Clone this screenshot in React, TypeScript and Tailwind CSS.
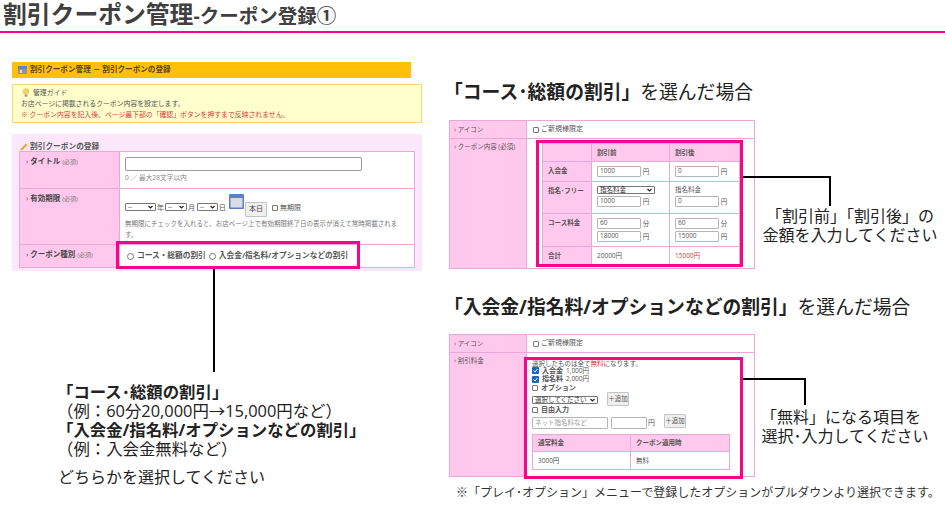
import React from 'react';

const sans = 'font-["Open_Sans","Noto_Sans_CJK_JP",sans-serif]';
const cellBorder = 'border-[#e9a9d8]';

function Field({ value, className = '' }: { value?: string; className?: string }) {
  return (
    <span
      className={`inline-flex items-center h-[11px] px-[2px] align-top border border-[#b5b5b5] rounded-[1px] bg-white text-[6.5px] leading-none text-[#555] ${className}`}
    >
      {value}
    </span>
  );
}

function Select({ label, className = '' }: { label: string; className?: string }) {
  return (
    <span
      className={`inline-flex items-center justify-between h-[8px] px-[2px] border border-[#777] rounded-[1px] bg-white text-[6.5px] leading-none text-[#333] ${className}`}
    >
      {label}
      <svg width="5" height="4" viewBox="0 0 5 4">
        <path d="M0.5 1 L2.5 3 L4.5 1" fill="none" stroke="#222" strokeWidth="1.2" />
      </svg>
    </span>
  );
}

function AddButton({ className = '' }: { className?: string }) {
  return (
    <span
      className={`inline-flex items-center justify-center w-[22px] h-[14px] border border-[#c4c4c4] rounded-[1px] bg-[#efefef] text-[6.5px] text-[#555] ${className}`}
    >
      ＋追加
    </span>
  );
}

function Box({ checked }: { checked?: boolean }) {
  return checked ? (
    <svg width="7" height="7" viewBox="0 0 7 7" className="shrink-0">
      <rect width="7" height="7" rx="1" fill="#1766c2" />
      <path d="M1.5 3.5 L3 5 L5.5 2" fill="none" stroke="#fff" strokeWidth="1" />
    </svg>
  ) : (
    <span className="w-[6px] h-[6px] shrink-0 border border-[#777] rounded-[1px] bg-white" />
  );
}

function Radio() {
  return <span className="w-[7px] h-[7px] rounded-full border border-[#777] bg-white shrink-0" />;
}

function LeftRow({
  label,
  note,
  height,
  children,
}: {
  label: string;
  note: string;
  height: string;
  children: React.ReactNode;
}) {
  return (
    <div className={`flex border-b ${cellBorder} ${height}`}>
      <div className={`w-[100px] shrink-0 bg-[#ffc8ec] border-r ${cellBorder} pl-[6px] pt-[4px] text-[7.5px] leading-[11px] text-[#444]`}>
        › <span className="font-bold">{label}</span> <span className="text-[6px] text-[#777]">{note}</span>
      </div>
      <div className="flex-1 pl-[5px] bg-white">{children}</div>
    </div>
  );
}

function GuideAndForm() {
  return (
    <div className="flex flex-col w-[410px]">
      <div className="flex items-center gap-[3px] w-[399px] h-[16px] bg-[#ffc107] pl-[6px] text-[7.6px] font-bold text-[#5a4300]">
        <svg width="9" height="8" viewBox="0 0 9 8">
          <rect x="0" y="2" width="9" height="6" fill="#8a9a8a" />
          <rect x="0" y="0" width="9" height="3" fill="#5f87b8" />
          <rect x="2" y="4" width="2" height="3" fill="#e8e0c0" />
        </svg>
        割引クーポン管理 － 割引クーポンの登録
      </div>
      <div className="mt-[6px] h-[39px] border border-[#f3d873] bg-[#ffffcc] pl-[8px] pt-[2px] text-[6.85px] leading-[11px] text-[#555]">
        <div className="flex items-center gap-[3px] pl-[1px]">
          <svg width="8" height="9" viewBox="0 0 8 9">
            <circle cx="4" cy="3.5" r="3.2" fill="#f4cf63" />
            <rect x="2.6" y="6.5" width="2.8" height="2.2" fill="#9b9b9b" />
          </svg>
          管理ガイド
        </div>
        <div>お店ページに掲載されるクーポン内容を設定します。</div>
        <div className="text-[#d43c3c]">※ クーポン内容を記入後、ページ最下部の「確認」ボタンを押すまで反映されません。</div>
      </div>
      <div className="mt-[11px] h-[137px] bg-[#fce8fa] px-[7px] pt-[7px]">
        <div className="flex items-end gap-[2px] h-[10px] pl-[1px] text-[7.7px] leading-[10px] font-bold text-[#555]">
          <svg width="8" height="8" viewBox="0 0 8 8">
            <path d="M0.5 7.5 L1 5.5 L6 0.5 L7.5 2 L2.5 7 Z" fill="#eba23c" />
          </svg>
          割引クーポンの登録
        </div>
        <div className={`border border-b-0 ${cellBorder}`}>
          <LeftRow label="タイトル" note="(必須)" height="h-[37px]">
            <div className="mt-[5px] w-[237px] h-[14px] border border-[#9a9a9a] rounded-[2px] bg-white" />
            <div className="mt-[2px] text-[6.7px] text-[#888]">0 ／ 最大28文字以内</div>
          </LeftRow>
          <LeftRow label="有効期限" note="(必須)" height="h-[56px]">
            <div className="flex items-end gap-[1px] h-[28px] text-[7px] text-[#555]">
              <Select label="--" className="w-[31px] mb-[6px]" />
              <span className="mb-[4px]">年</span>
              <Select label="--" className="w-[22px] mb-[6px]" />
              <span className="mb-[4px]">月</span>
              <Select label="--" className="w-[21px] mb-[6px] ml-[1px]" />
              <span className="mb-[4px]">日</span>
              <svg width="15" height="15" viewBox="0 0 15 15" className="mb-[8px] ml-[2px]">
                <rect width="15" height="15" rx="1" fill="#5c80c4" />
                <rect x="1.5" y="4" width="12" height="9.5" fill="#d8dce8" />
              </svg>
              <span className="inline-flex items-center justify-center w-[22px] h-[15px] border border-[#c4c4c4] rounded-[1px] bg-[#efefef] text-[#444]">
                本日
              </span>
              <span className="flex items-center gap-[2px] ml-[4px] mb-[4px]">
                <Box />
                無期限
              </span>
            </div>
            <div className="mt-[1px] w-[280px] text-[6.5px] leading-[11px] text-[#777]">
              無期限にチェックを入れると、お店ページ上で有効期限終了日の表示が消えて常時掲載されます。
            </div>
          </LeftRow>
          <LeftRow label="クーポン種別" note="(必須)" height="h-[23px]">
            <div className="flex items-center gap-[3px] h-full pl-[2px] text-[7.7px] font-bold text-[#555]">
              <Radio />
              <span>コース・総額の割引</span>
              <Radio />
              <span>入会金/指名料/オプションなどの割引</span>
            </div>
          </LeftRow>
        </div>
      </div>
    </div>
  );
}

function DiscountTable() {
  const head = `bg-[#ffc8ec] border ${cellBorder} text-left font-bold pl-[5px]`;
  const body = `bg-white border ${cellBorder} pl-[5px] align-top`;
  return (
    <table className="table-fixed border-collapse w-[197px] text-[6.5px] leading-[11px] text-[#555]">
      <colgroup>
        <col className="w-[49px]" />
        <col className="w-[78px]" />
        <col className="w-[70px]" />
      </colgroup>
      <tbody>
        <tr className="h-[18px]">
          <td className={head} />
          <td className={head}>割引前</td>
          <td className={head}>割引後</td>
        </tr>
        <tr className="h-[20px]">
          <td className={`${head} align-top pt-[3px]`}>入会金</td>
          <td className={`${body} pt-[4px]`}>
            <Field value="1000" className="w-[44px]" /> 円
          </td>
          <td className={`${body} pt-[4px]`}>
            <Field value="0" className="w-[44px]" /> 円
          </td>
        </tr>
        <tr className="h-[32px]">
          <td className={`${head} align-top pt-[3px]`}>指名･フリー</td>
          <td className={`${body} pt-[4px]`}>
            <Select label="指名料金" className="w-[58px] !flex" />
            <div className="mt-[2px]">
              <Field value="1000" className="w-[44px]" /> 円
            </div>
          </td>
          <td className={`${body} pt-[4px]`}>
            <div className="h-[8px] leading-[8px]">指名料金</div>
            <div className="mt-[2px]">
              <Field value="0" className="w-[44px]" /> 円
            </div>
          </td>
        </tr>
        <tr className="h-[33px]">
          <td className={`${head} align-top pt-[3px]`}>コース料金</td>
          <td className={`${body} pt-[4px]`}>
            <div>
              <Field value="60" className="w-[44px]" /> 分
            </div>
            <div className="mt-[2px]">
              <Field value="18000" className="w-[44px]" /> 円
            </div>
          </td>
          <td className={`${body} pt-[4px]`}>
            <div>
              <Field value="60" className="w-[44px]" /> 分
            </div>
            <div className="mt-[2px]">
              <Field value="15000" className="w-[44px]" /> 円
            </div>
          </td>
        </tr>
        <tr className="h-[18px]">
          <td className={head}>合計</td>
          <td className={`${body} !align-middle`}>20000円</td>
          <td className={`${body} !align-middle text-[#d43c3c]`}>15000円</td>
        </tr>
      </tbody>
    </table>
  );
}

function FreeItemPanel() {
  return (
    <div className="pl-[5px] pt-[5px] text-[7px] leading-[8px] text-[#555]">
      <div className="h-[5px] text-[6.5px] leading-[5px]">
        選択したものは全て<span className="text-[#d43c3c]">無料</span>になります。
      </div>
      <div className="flex items-center gap-[3px] h-[9px] font-bold">
        <Box checked />
        入会金 <span className="font-normal text-[6.5px]">1,000円</span>
      </div>
      <div className="flex items-center gap-[3px] h-[8px] font-bold">
        <Box checked />
        指名料 <span className="font-normal text-[6.5px]">2,000円</span>
      </div>
      <div className="flex items-center gap-[3px] h-[9px] font-bold">
        <Box />
        オプション
      </div>
      <div className="flex items-start gap-[9px] h-[14px]">
        <Select label="選択してください" className="w-[66px] mt-[4px]" />
        <AddButton />
      </div>
      <div className="flex items-center gap-[3px] h-[8px] font-bold">
        <Box />
        自由入力
      </div>
      <div className="flex items-center h-[18px]">
        <Field value="ネット指名料など" className="w-[76px] !h-[12px] !text-[#999]" />
        <Field className="w-[36px] !h-[12px] ml-[3px]" />
        <span className="ml-[1px]">円</span>
        <AddButton className="ml-[9px] -mt-[4px]" />
      </div>
      <div className={`w-[198px] mt-[2px] border-x border-b ${cellBorder}`}>
        <div className="flex h-[18px] bg-[#ffc8ec] font-bold text-[6.5px]">
          <div className={`w-[98px] border-y border-r ${cellBorder} pl-[5px] flex items-center`}>通常料金</div>
          <div className={`flex-1 border-y ${cellBorder} pl-[5px] flex items-center`}>クーポン適用時</div>
        </div>
        <div className="flex h-[17px] bg-white text-[6.5px]">
          <div className={`w-[98px] border-r ${cellBorder} pl-[5px] flex items-center`}>3000円</div>
          <div className="flex-1 pl-[5px] flex items-center">無料</div>
        </div>
      </div>
    </div>
  );
}

function RightForm({
  label,
  contentHeight,
  contentClass,
  children,
}: {
  label: string;
  contentHeight: string;
  contentClass: string;
  children: React.ReactNode;
}) {
  return (
    <div className={`w-[306px] border ${cellBorder} text-[6.5px] text-[#555] bg-white`}>
      <div className={`flex h-[18px] border-b ${cellBorder}`}>
        <div className={`w-[77px] bg-[#ffc8ec] border-r ${cellBorder} pl-[4px] flex items-center`}>› アイコン</div>
        <div className="flex items-center gap-[2px] pl-[6px] text-[7px]">
          <Box />
          ご新規様限定
        </div>
      </div>
      <div className={`flex ${contentHeight}`}>
        <div className={`w-[77px] bg-[#ffc8ec] border-r ${cellBorder} pl-[4px] pt-[3px]`}>{label}</div>
        <div className={`flex-1 ${contentClass}`}>{children}</div>
      </div>
    </div>
  );
}

export default function App() {
  return (
    <div className={`relative w-[945px] h-[520px] overflow-hidden bg-white ${sans}`}>
      <header className="flex items-baseline h-[33px] pl-[3px] border-b-2 border-[#f5058a] font-bold text-[#404040] text-[23.8px] leading-[28px]">
        割引クーポン管理
        <span className="text-[19.5px]">-クーポン登録①</span>
      </header>

      <div className="flex">
        <div className="w-[448px] shrink-0 pl-[12px] pt-[29px]">
          <GuideAndForm />
          <div className="mt-[111px] pl-[45px] text-[16.4px] leading-[19px] text-[#222]">
            <div className="font-bold">「コース･総額の割引」</div>
            <div>（例：60分20,000円→15,000円など）</div>
            <div className="font-bold">「入会金/指名料/オプションなどの割引」</div>
            <div>（例：入会金無料など）</div>
            <div className="mt-[10px] ml-[1px] text-[16px]">どちらかを選択してください</div>
          </div>
        </div>

        <div className="flex-1 pt-[47px]">
          <h2 className="h-[24px] -ml-[4px] text-[18.8px] leading-[24px] text-[#222]">
            <span className="font-bold">「コース･総額の割引」</span>を選んだ場合
          </h2>
          <div className="mt-[16px] pl-[1px]">
            <RightForm label="› クーポン内容 (必須)" contentHeight="h-[129px]" contentClass="pl-[15px] pt-[4px]">
              <DiscountTable />
            </RightForm>
          </div>
          <h2 className="mt-[26px] h-[24px] -ml-[4px] text-[18.8px] leading-[24px] text-[#222]">
            <span className="font-bold">「入会金/指名料/オプションなどの割引」</span>を選んだ場合
          </h2>
          <div className="mt-[15px] pl-[1px]">
            <RightForm label="› 割引料金" contentHeight="h-[123px]" contentClass="pt-[3px]">
              <FreeItemPanel />
            </RightForm>
          </div>
          <p className="mt-[8px] pl-[8px] text-[12px] leading-[16px] text-[#333]">
            ※「プレイ･オプション」メニューで登録したオプションがプルダウンより選択できます。
          </p>
        </div>
      </div>

      {/* highlights and connectors over the screenshots */}
      <div className="absolute left-[116px] top-[241px] w-[244px] h-[28px] border-[3px] border-[#f5058a]" />
      <div className="absolute left-[536px] top-[140px] w-[207px] h-[127px] border-[3px] border-[#f5058a]" />
      <div className="absolute left-[524px] top-[357px] w-[219px] h-[122px] border-[3px] border-[#f5058a]" />

      <div className="absolute left-[213px] top-[269px] w-[2px] h-[103px] bg-black" />
      <div className="absolute left-[743px] top-[176px] w-[88px] h-[30px] border-t-2 border-r-2 border-black" />
      <div className="absolute left-[743px] top-[378px] w-[63px] h-[27px] border-t-2 border-r-2 border-black" />

      <div className="absolute left-[747px] top-[207px] w-[206px] text-center text-[16px] leading-[19px] text-[#222]">
        「割引前」「割引後」の
        <br />
        金額を入力してください
      </div>
      <div className="absolute left-[742px] top-[408px] w-[206px] text-center text-[16px] leading-[19px] text-[#222]">
        <div className="-ml-[8px]">「無料」になる項目を</div>
        選択･入力してください
      </div>
    </div>
  );
}
